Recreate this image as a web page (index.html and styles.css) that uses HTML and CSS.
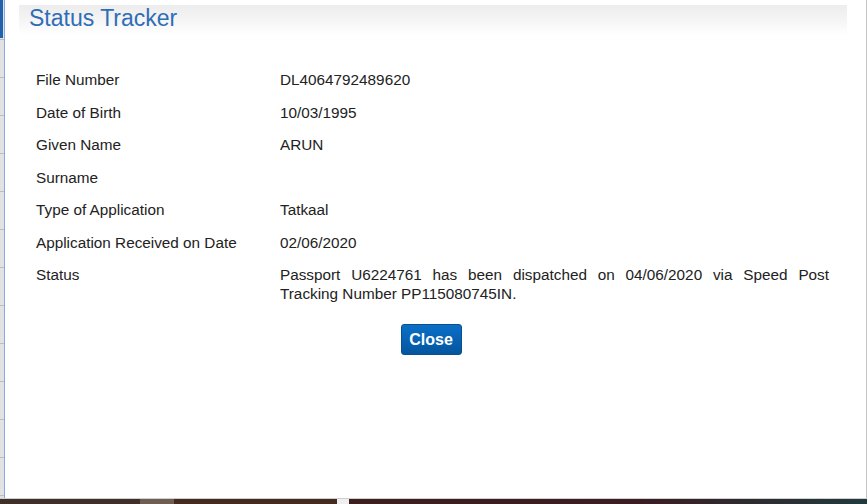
FILE: index.html
```html
<!DOCTYPE html>
<html lang="en">
<head>
<meta charset="utf-8">
<title>Status Tracker</title>
<link rel="stylesheet" href="styles.css">
</head>
<body>
<div class="screen">
  <div class="rail"><div class="rail-tab"></div></div>
  <div class="modal">
    <div class="modal-header"><h1 class="modal-title">Status Tracker</h1></div>
    <div class="modal-body">
      <div class="details">
        <div class="label">File Number</div><div class="value">DL4064792489620</div>
        <div class="label">Date of Birth</div><div class="value">10/03/1995</div>
        <div class="label">Given Name</div><div class="value">ARUN</div>
        <div class="label">Surname</div><div class="value"></div>
        <div class="label">Type of Application</div><div class="value">Tatkaal</div>
        <div class="label">Application Received on Date</div><div class="value">02/06/2020</div>
        <div class="label">Status</div><div class="value justify">Passport U6224761 has been dispatched on 04/06/2020 via Speed Post Tracking Number PP115080745IN.</div>
      </div>
      <div class="actions"><button class="btn-close" type="button">Close</button></div>
    </div>
  </div>
</div>
<div class="divider"></div>
<div class="taskbar">
  <div class="seg seg-a"></div>
  <div class="seg seg-b"></div>
  <div class="seg seg-c"></div>
  <div class="seg seg-d"></div>
  <div class="seg seg-e"></div>
</div>
</body>
</html>
```
FILE: styles.css
```css
html, body {
  margin: 0;
  padding: 0;
}
body {
  width: 867px;
  height: 504px;
  overflow: hidden;
  display: flex;
  flex-direction: column;
  font-family: "Liberation Sans", Arial, sans-serif;
  background: #fff;
}
.screen {
  flex: 1;
  display: flex;
  min-height: 0;
}
.rail {
  width: 4px;
  border-right: 1px solid #8aa7e4;
  background: repeating-linear-gradient(to bottom, #e2e2e2 0, #e2e2e2 37px, #bdbdbd 37px, #bdbdbd 38px);
  background-position: 0 2px;
}
.rail-tab {
  width: 3px;
  height: 38px;
  background: #1f62ae;
}
.modal {
  flex: 1;
  background: #fff;
  border-right: 1px solid #c4c4c4;
  display: flex;
  flex-direction: column;
}
.modal-header {
  margin: 5px 19px 0 14px;
  height: 30px;
  padding-left: 10px;
  background: linear-gradient(to bottom, #ededed 0%, #f3f3f3 40%, #ffffff 100%);
}
.modal-title {
  margin: 0;
  font-weight: normal;
  font-size: 23px;
  line-height: 26px;
  color: #2f6db6;
}
.modal-body {
  margin-top: 29px;
  padding: 0 37px 0 31px;
}
.details {
  display: grid;
  grid-template-columns: 244px 1fr;
  font-size: 15.3px;
  line-height: 18.5px;
  color: #222;
}
.label, .value {
  padding: 7px 0 7px;
  min-height: 18.5px;
}
.justify {
  text-align: justify;
}
.actions {
  display: flex;
  justify-content: center;
  margin-top: 14px;
  padding-right: 3px;
}
.btn-close {
  width: 61px;
  height: 31px;
  border: 1px solid #0a4f90;
  border-radius: 3px;
  background: linear-gradient(to bottom, #0b6fc6 0%, #0660b0 60%, #05559e 100%);
  color: #fff;
  font-family: "Liberation Sans", Arial, sans-serif;
  font-weight: bold;
  font-size: 16px;
  padding: 0;
  cursor: pointer;
}
.divider {
  height: 1px;
  background: #cfcfcf;
}
.taskbar {
  height: 5px;
  display: flex;
}
.seg-a { width: 140px; background: #3e3028; }
.seg-b { width: 34px; background: #6d5d53; }
.seg-c { width: 163px; background: #452a20; }
.seg-d { width: 12px; background: #efefef; }
.seg-e { flex: 1; background: linear-gradient(to right, #3d1f1d 0%, #3a1c22 55%, #213a3e 100%); }
```
